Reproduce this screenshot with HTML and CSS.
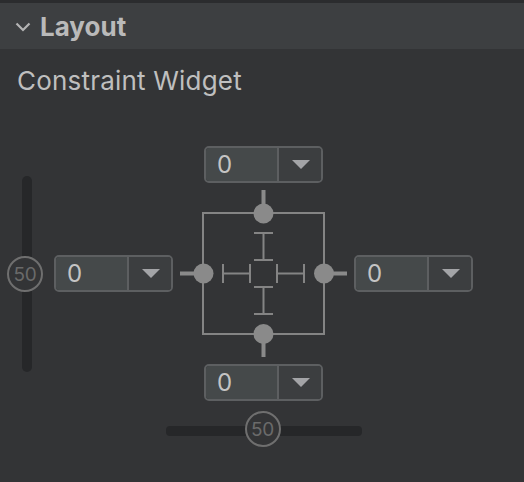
FILE: index.html
```html
<!DOCTYPE html>
<html>
<head>
<meta charset="utf-8">
<link rel="stylesheet" href="styles.css">
</head>
<body>
<div class="panel">
  <div class="header">
    <svg class="chevron" width="16" height="10" viewBox="0 0 16 10"><path d="M1.5 1.5 L8 8 L14.5 1.5" fill="none" stroke="#b4b4b4" stroke-width="2.2"/></svg>
    <span class="header-title">Layout</span>
  </div>
  <div class="section-title">Constraint Widget</div>
  <div class="widget">
    <div class="vslider">
      <div class="thumb vthumb">50</div>
    </div>
    <div class="dd dd-top"><span class="dd-val">0</span><span class="dd-btn"><i class="tri"></i></span></div>
    <div class="dd dd-left"><span class="dd-val">0</span><span class="dd-btn"><i class="tri"></i></span></div>
    <svg class="diagram" width="181" height="181" viewBox="0 0 181 181">
      <g stroke="#848484" fill="none">
        <rect x="30" y="30" width="121" height="121" stroke-width="2"/>
        <g stroke-width="2">
          <line x1="90.5" y1="49" x2="90.5" y2="78"/>
          <line x1="81" y1="50" x2="100" y2="50"/>
          <line x1="81" y1="77" x2="100" y2="77"/>
          <line x1="90.5" y1="103" x2="90.5" y2="132"/>
          <line x1="81" y1="104" x2="100" y2="104"/>
          <line x1="81" y1="131" x2="100" y2="131"/>
          <line x1="49" y1="90.5" x2="78" y2="90.5"/>
          <line x1="50" y1="81" x2="50" y2="100"/>
          <line x1="77" y1="81" x2="77" y2="100"/>
          <line x1="103" y1="90.5" x2="132" y2="90.5"/>
          <line x1="104" y1="81" x2="104" y2="100"/>
          <line x1="131" y1="81" x2="131" y2="100"/>
        </g>
        <g stroke="#8a8a8a" stroke-width="4">
          <line x1="90.5" y1="7" x2="90.5" y2="30"/>
          <line x1="90.5" y1="151" x2="90.5" y2="174"/>
          <line x1="7" y1="90.5" x2="30" y2="90.5"/>
          <line x1="151" y1="90.5" x2="174" y2="90.5"/>
        </g>
      </g>
      <g fill="#8a8a8a">
        <circle cx="90.5" cy="30.5" r="10"/>
        <circle cx="90.5" cy="151" r="10"/>
        <circle cx="30.5" cy="90.5" r="10"/>
        <circle cx="151" cy="90.5" r="10"/>
      </g>
    </svg>
    <div class="dd dd-right"><span class="dd-val">0</span><span class="dd-btn"><i class="tri"></i></span></div>
    <div class="dd dd-bottom"><span class="dd-val">0</span><span class="dd-btn"><i class="tri"></i></span></div>
    <div class="hslider">
      <div class="thumb hthumb">50</div>
    </div>
  </div>
</div>
</body>
</html>
```
FILE: styles.css
```css
html, body {
  margin: 0;
  padding: 0;
  background: #333436;
}
.panel {
  width: 524px;
  height: 482px;
  background: #333436;
  border-top: 3px solid #2b2c2e;
  box-sizing: border-box;
  font-family: Inter, "Open Sans", sans-serif;
  overflow: hidden;
}
.header {
  height: 46px;
  background: #3d3f41;
  display: flex;
  align-items: center;
  padding-left: 15px;
  box-sizing: border-box;
}
.chevron {
  margin-top: 2px;
}
.header-title {
  margin-left: 9px;
  font-size: 26px;
  font-weight: 700;
  color: #bababa;
  line-height: 31px;
}
.section-title {
  margin: 17px 0 0 17px;
  font-size: 26px;
  color: #bfbfbf;
  line-height: 30px;
  letter-spacing: 0.2px;
}
.widget {
  margin-top: 50px;
  display: grid;
  grid-template-columns: 54px 119px 181px 119px;
  grid-template-rows: 37px 181px 37px auto;
}
.vslider {
  grid-column: 1;
  grid-row: 1 / 4;
  align-self: start;
  justify-self: start;
  margin: 30px 0 0 22px;
  width: 10px;
  height: 196px;
  border-radius: 5px;
  background: #262729;
  position: relative;
}
.hslider {
  grid-column: 2 / 5;
  grid-row: 4;
  justify-self: center;
  margin-top: 25px;
  width: 196px;
  height: 10px;
  border-radius: 4px;
  background: #262729;
  position: relative;
}
.thumb {
  position: absolute;
  width: 32px;
  height: 32px;
  border: 2px solid #6f6f6f;
  border-radius: 50%;
  background: #333436;
  color: #6a6a6a;
  font-size: 19px;
  display: flex;
  align-items: center;
  justify-content: center;
  letter-spacing: -0.3px;
}
.vthumb {
  left: -15px;
  top: 80px;
}
.hthumb {
  left: 79px;
  top: -15px;
}
.dd {
  display: flex;
  height: 37px;
  width: 119px;
  box-sizing: border-box;
  border: 2px solid #5d5f61;
  border-radius: 5px;
  overflow: hidden;
}
.dd-val {
  width: 73px;
  background: #45494a;
  border-right: 2px solid #5d5f61;
  color: #c4c4c4;
  font-size: 24px;
  display: flex;
  align-items: center;
  padding-left: 11px;
  box-sizing: border-box;
}
.dd-btn {
  flex: 1;
  background: #3c3e40;
  display: flex;
  align-items: center;
  justify-content: center;
}
.tri {
  width: 0;
  height: 0;
  border-left: 9px solid transparent;
  border-right: 9px solid transparent;
  border-top: 9px solid #a3a4a7;
  margin-left: 1px;
}
.dd-top {
  grid-column: 3;
  grid-row: 1;
  justify-self: center;
}
.dd-left {
  grid-column: 2;
  grid-row: 2;
  align-self: center;
  margin-top: -1px;
}
.dd-right {
  grid-column: 4;
  grid-row: 2;
  align-self: center;
  margin-top: -1px;
}
.dd-bottom {
  grid-column: 3;
  grid-row: 3;
  justify-self: center;
}
.diagram {
  grid-column: 3;
  grid-row: 2;
  display: block;
}
```
